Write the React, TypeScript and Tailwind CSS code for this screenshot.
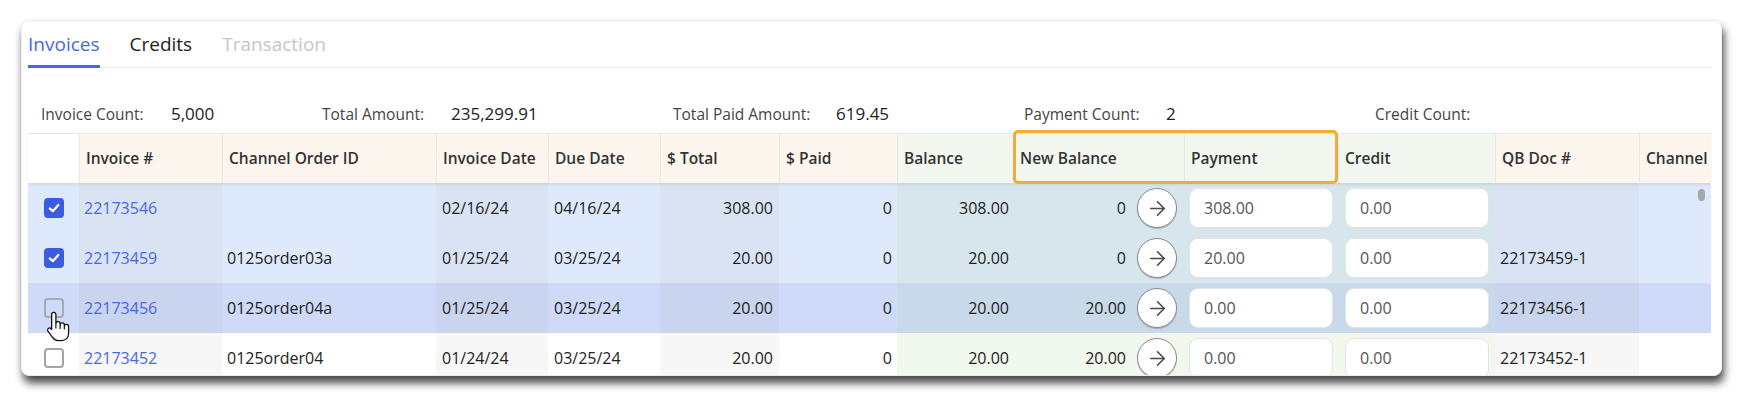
import React from "react";
import { ArrowRight } from "lucide-react";

type RowState = "sel" | "hover" | "normal";

interface Row {
  state: RowState;
  checked: boolean;
  inv: string;
  order: string;
  invDate: string;
  dueDate: string;
  total: string;
  paid: string;
  balance: string;
  newBal: string;
  payment: string;
  credit: string;
  qb: string;
}

const rows: Row[] = [
  { state: "sel", checked: true, inv: "22173546", order: "", invDate: "02/16/24", dueDate: "04/16/24", total: "308.00", paid: "0", balance: "308.00", newBal: "0", payment: "308.00", credit: "0.00", qb: "" },
  { state: "sel", checked: true, inv: "22173459", order: "0125order03a", invDate: "01/25/24", dueDate: "03/25/24", total: "20.00", paid: "0", balance: "20.00", newBal: "0", payment: "20.00", credit: "0.00", qb: "22173459-1" },
  { state: "hover", checked: false, inv: "22173456", order: "0125order04a", invDate: "01/25/24", dueDate: "03/25/24", total: "20.00", paid: "0", balance: "20.00", newBal: "20.00", payment: "0.00", credit: "0.00", qb: "22173456-1" },
  { state: "normal", checked: false, inv: "22173452", order: "0125order04", invDate: "01/24/24", dueDate: "03/25/24", total: "20.00", paid: "0", balance: "20.00", newBal: "20.00", payment: "0.00", credit: "0.00", qb: "22173452-1" },
];

const BG: Record<RowState, { light: string; dark: string; green: string }> = {
  sel: { light: "bg-[#dfe9fc]", dark: "bg-[#d9e3f4]", green: "bg-[#d6e6ec]" },
  hover: { light: "bg-[#cedaf8]", dark: "bg-[#c9d4ef]", green: "bg-[#c8d9ea]" },
  normal: { light: "bg-white", dark: "bg-[#f7f7f7]", green: "bg-[#f1f8ee]" },
};

const GRID = "grid grid-cols-[51px_143px_214px_112px_112px_119px_118px_116px_171px_154px_157px_144px_72px]";

function cellBg(state: RowState, idx: number) {
  if (idx >= 7 && idx <= 10) return BG[state].green;
  return idx % 2 === 1 ? BG[state].dark : BG[state].light;
}

function Checkbox({ checked, hover }: { checked: boolean; hover?: boolean }) {
  if (checked) {
    return (
      <div className="w-[20px] h-[20px] rounded-[4px] bg-[#3a5ce0] flex items-center justify-center">
        <svg width="14" height="14" viewBox="0 0 14 14">
          <polyline points="2.8,7.4 5.8,10.2 11.3,4" fill="none" stroke="white" strokeWidth="2.2" strokeLinecap="round" strokeLinejoin="round" />
        </svg>
      </div>
    );
  }
  return (
    <div className={"w-[20px] h-[20px] rounded-[4px] border-2 " + (hover ? "border-[#a3a9b5] bg-transparent" : "border-[#a0a5ad] bg-white")} />
  );
}

function Input({ value, ml }: { value: string; ml: string }) {
  return (
    <div className={"h-[40px] w-[144px] rounded-[9px] bg-white border border-[#e4e4e4] flex items-center pl-[14px] text-[#555] " + ml}>
      {value}
    </div>
  );
}

function HandCursor() {
  return (
    <svg width="24" height="31" viewBox="0 0 17 22" className="absolute left-[24px] top-[290px]">
      <path
        d="M4 2.5 a1.5 1.5 0 0 1 3 0 V9 a1.5 1.5 0 0 1 3 0 V10 a1.5 1.5 0 0 1 3 0 V11 a1.5 1.5 0 0 1 3 0 V16 c0 3-2 5-5 5 H8.5 c-2 0-3-1-4-2.5 L1.3 14.2 a1.4 1.4 0 0 1 2.2-1.7 L4 13.2 Z"
        fill="white"
        stroke="#111"
        strokeWidth="0.9"
        strokeLinejoin="round"
      />
      <path d="M7 9 v3.5 M10 10 v2.8 M13 11 v2.2" stroke="#111" strokeWidth="0.8" fill="none" />
    </svg>
  );
}

const headers: { label: string; bg: string }[] = [
  { label: "", bg: "bg-white" },
  { label: "Invoice #", bg: "bg-[#fdf6ef]" },
  { label: "Channel Order ID", bg: "bg-[#fdf6ef]" },
  { label: "Invoice Date", bg: "bg-[#fdf6ef]" },
  { label: "Due Date", bg: "bg-[#fdf6ef]" },
  { label: "$ Total", bg: "bg-[#fdf6ef]" },
  { label: "$ Paid", bg: "bg-[#fdf6ef]" },
  { label: "Balance", bg: "bg-[#f2f8ef]" },
  { label: "New Balance", bg: "bg-[#f2f8ef]" },
  { label: "Payment", bg: "bg-[#f2f8ef]" },
  { label: "Credit", bg: "bg-[#f2f8ef]" },
  { label: "QB Doc #", bg: "bg-[#fdf6ef]" },
  { label: "Channel", bg: "bg-[#fdf6ef]" },
];

export default function App() {
  return (
    <div className="w-[1743px] h-[396px] bg-white pt-[20px] pl-[21px] font-['Open_Sans',sans-serif]">
      <div className="relative w-[1701px] h-[356px] rounded-[8px] bg-white overflow-hidden border border-[#ececec] shadow-[2px_7px_8px_rgba(0,0,0,0.72)] pl-[6px] pr-[10px]">
        {/* Tabs */}
        <div className="h-[47px] flex items-center gap-[30px] border-b border-[#ececec] text-[19px]">
          <div className="relative h-full flex items-center text-[#4767e6]">
            Invoices
            <div className="absolute left-0 right-0 bottom-[-1px] h-[3px] bg-[#4767e6]" />
          </div>
          <div className="text-[#222]">Credits</div>
          <div className="text-[#c6c6c6]">Transaction</div>
        </div>

        {/* Summary */}
        <div className="h-[65px] pt-[27px] pl-[13px] grid grid-cols-[281px_351px_351px_351px_1fr] leading-[20px]">
          <div className="flex items-center">
            <span className="w-[130px] text-[15.5px] text-[#444]">Invoice Count:</span>
            <span className="text-[17px] text-[#222]">5,000</span>
          </div>
          <div className="flex items-center">
            <span className="w-[129px] text-[15.5px] text-[#444]">Total Amount:</span>
            <span className="text-[17px] text-[#222]">235,299.91</span>
          </div>
          <div className="flex items-center">
            <span className="w-[163px] text-[15.5px] text-[#444]">Total Paid Amount:</span>
            <span className="text-[17px] text-[#222]">619.45</span>
          </div>
          <div className="flex items-center">
            <span className="w-[142px] text-[15.5px] text-[#444]">Payment Count:</span>
            <span className="text-[17px] text-[#222]">2</span>
          </div>
          <div className="flex items-center">
            <span className="text-[15.5px] text-[#444]">Credit Count:</span>
          </div>
        </div>

        {/* Table */}
        <div className="relative">
          <div className={GRID + " h-[50px] border-t border-[#ebe6e0] relative z-10 shadow-[0_2px_3px_rgba(0,0,0,0.07)]"}>
            {headers.map((h, i) => (
              <div
                key={i}
                className={
                  h.bg +
                  " flex items-center font-semibold text-[15.5px] text-[#333] " +
                  (i === 0 ? "" : "border-l border-[#ece7e1] pl-[6px]")
                }
              >
                {h.label}
              </div>
            ))}
          </div>

          {rows.map((r, ri) => (
            <div key={ri} className={GRID + " h-[50px] text-[16px] text-[#222]"}>
              <div className={cellBg(r.state, 0) + " flex items-center justify-center"}>
                <Checkbox checked={r.checked} hover={r.state === "hover"} />
              </div>
              <div className={cellBg(r.state, 1) + " flex items-center pl-[5px] text-[#4a68e6]"}>{r.inv}</div>
              <div className={cellBg(r.state, 2) + " flex items-center pl-[5px]"}>{r.order}</div>
              <div className={cellBg(r.state, 3) + " flex items-center pl-[6px]"}>{r.invDate}</div>
              <div className={cellBg(r.state, 4) + " flex items-center pl-[6px]"}>{r.dueDate}</div>
              <div className={cellBg(r.state, 5) + " flex items-center justify-end pr-[6px]"}>{r.total}</div>
              <div className={cellBg(r.state, 6) + " flex items-center justify-end pr-[5px]"}>{r.paid}</div>
              <div className={cellBg(r.state, 7) + " flex items-center justify-end pr-[4px]"}>{r.balance}</div>
              <div className={cellBg(r.state, 8) + " flex items-center justify-end pr-[7px]"}>
                <span>{r.newBal}</span>
                <div className="ml-[11px] w-[40px] h-[40px] rounded-full bg-white border-[1.5px] border-[#8a8a8a] shadow-[0_1px_1px_rgba(0,0,0,0.2)] flex items-center justify-center">
                  <ArrowRight size={23} strokeWidth={1.7} color="#4a4a4a" />
                </div>
              </div>
              <div className={cellBg(r.state, 9) + " flex items-center"}>
                <Input value={r.payment} ml="ml-[5px]" />
              </div>
              <div className={cellBg(r.state, 10) + " flex items-center"}>
                <Input value={r.credit} ml="ml-[7px]" />
              </div>
              <div className={cellBg(r.state, 11) + " flex items-center pl-[5px]"}>{r.qb}</div>
              <div className={cellBg(r.state, 12)} />
            </div>
          ))}
        </div>

        {/* Highlight box */}
        <div className="absolute left-[991px] top-[109px] w-[325px] h-[54px] rounded-[5px] border-[3px] border-[#f5a93c] z-20" />

        {/* Scrollbar thumb */}
        <div className="absolute left-[1676px] top-[168px] w-[7px] h-[12px] rounded-full bg-[#a9a9a9] z-20" />

        <HandCursor />
      </div>
    </div>
  );
}
